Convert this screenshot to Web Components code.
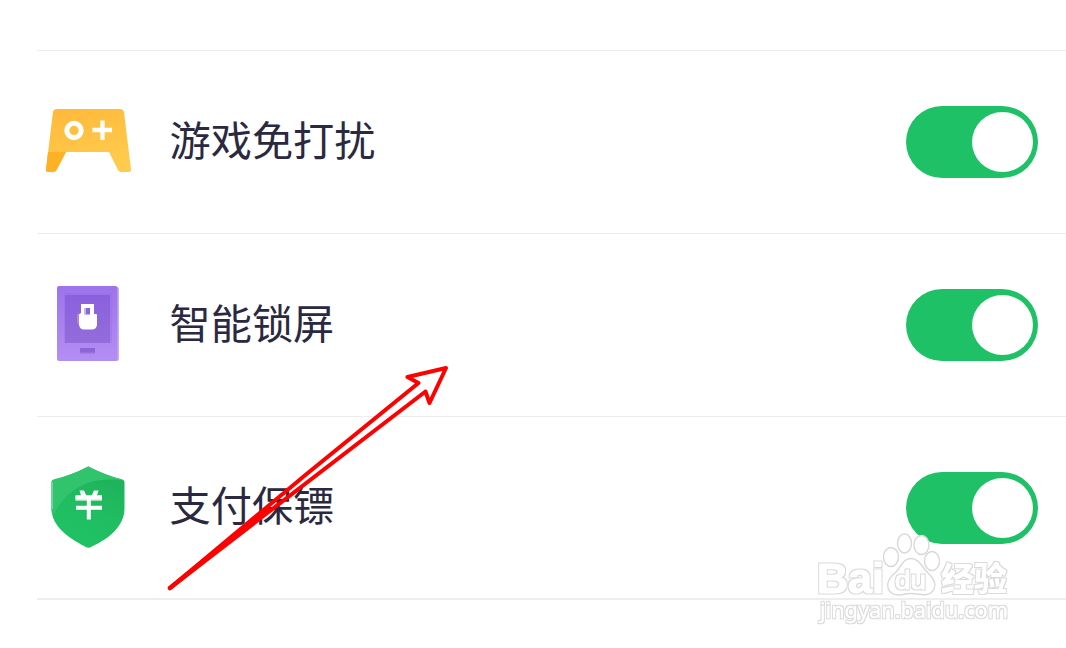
<!DOCTYPE html>
<html lang="zh-CN">
<head>
<meta charset="utf-8">
<title>设置</title>
<style>
body{margin:0;background:#fff;overflow:hidden;font-family:"Noto Sans CJK SC","Liberation Sans",sans-serif}
</style>
</head>
<body>
<settings-page>
  <setting-row label="游戏免打扰"><game-icon slot="icon"></game-icon></setting-row>
  <setting-row label="智能锁屏"><lock-icon slot="icon"></lock-icon></setting-row>
  <setting-row label="支付保镖"><shield-icon slot="icon"></shield-icon></setting-row>
  <pointer-arrow slot="over"></pointer-arrow>
  <brand-mark slot="over"></brand-mark>
</settings-page>
<script>
const define = (name, html, init) => customElements.define(name, class extends HTMLElement {
  constructor() {
    super();
    this.attachShadow({ mode: 'open' }).innerHTML = html;
  }
  connectedCallback() { if (init) init(this); }
});

define('toggle-switch', `<style>
:host{display:flex;box-sizing:border-box;width:132px;height:72px;border-radius:36px;background:#1ec166;padding:6px 5px;justify-content:flex-end}
span{width:61px;height:60px;border-radius:50%;background:#fff}
</style><span></span>`);

define('setting-row', `<style>
:host{display:flex;box-sizing:border-box;height:183px;align-items:center;border-bottom:1px solid #ececec;padding-right:28px}
.icon{width:102px;height:100px;flex:none;display:flex}
.label{margin-left:30.500px;flex:1;padding-bottom:9px;font-size:41.200px;line-height:60px;color:#2b293f;white-space:nowrap}
</style><div class="icon"><slot name="icon"></slot></div><div class="label"></div><toggle-switch></toggle-switch>`,
  el => { el.shadowRoot.querySelector('.label').textContent = el.getAttribute('label'); });

define('settings-page', `<style>
:host{display:block;position:relative;width:1066px;height:648px;overflow:hidden}
main{margin-left:37px;padding-top:50px}
.list{border-top:1px solid #ececec}
::slotted(setting-row:last-of-type){border-bottom:2px solid #eee}
</style><main><div class="list"><slot></slot></div></main><slot name="over"></slot>`);

const icon = (name, body) => define(name, `<style>:host{display:block}svg{display:block}</style><svg width="102" height="100" viewBox="37 0 102 100">${body}</svg>`);

icon('game-icon', `<defs><linearGradient id="g" x1="0" y1="0" x2=".35" y2="1"><stop stop-color="#ffb83a"/><stop offset="1" stop-color="#ffcb4d"/></linearGradient></defs>
<path d="M57 17H120Q123.500 17 124 20.500L131 77Q131.500 80 129 80H121Q119 80 118 78L109 60H66L56.500 78Q55.500 80 53.500 80H48Q45.500 80 46 77L53 20Q53.500 17 57 17Z" fill="url(#g)"/>
<path d="M48 60H66L56.500 78Q55.500 80 53.500 80H48Q45.500 80 46 77Z" fill="#ffb126"/>
<circle cx="74" cy="38.500" r="7.200" fill="none" stroke="#fff" stroke-width="5"/>
<path d="M92.500 38H112M102.500 28.500V48" stroke="#fff" stroke-width="4.300"/>`);

icon('lock-icon', `<defs><linearGradient id="g" x1="0" y1="0" x2="0" y2="1"><stop stop-color="#9d73eb"/><stop offset="1" stop-color="#b28ff3"/></linearGradient><linearGradient id="s" x1="0" y1="0" x2="0" y2="1"><stop stop-color="#8b60df"/><stop offset="1" stop-color="#936dd9"/></linearGradient></defs>
<rect x="59" y="12" width="60" height="74" rx="2" fill="#c6adf5"/><rect x="57" y="11" width="60.500" height="75" rx="2" fill="url(#g)"/>
<path d="M64 18H112V68H64Z" fill="#8e64df" opacity=".25"/>
<path d="M65 20H110V68H65Z" fill="url(#s)"/>
<path d="M77 39H80V50H79Q77 49 77 46Z" fill="#a98ae3"/>
<path fill-rule="evenodd" d="M81 29H94V39H96Q97 39 97 40V50Q96 54.500 92 54.500H84Q80 54.500 79 50V40Q79 38.500 81 38ZM84.500 33V39.500H90V33Z" fill="#fff"/>
<path d="M84.500 33H86V39.500H84.500Z" fill="#c9b5ef"/>
<path d="M80 73H95V78.500H80Z" fill="#9772df"/><path d="M80 73H95V77H80Z" fill="#8c65d6"/>`);

icon('shield-icon', `<defs><linearGradient id="g" x1=".8" y1="0" x2=".4" y2="1"><stop stop-color="#1eaf59"/><stop offset=".55" stop-color="#20bd61"/><stop offset="1" stop-color="#20c265"/></linearGradient><clipPath id="c"><path d="M88.300 8.500Q106 17.500 122 21.500Q124.500 22 124.500 24V51C124 68 110 80 92 88.500Q88.500 91 85 88.500C67 79 52 68 51.500 51V24Q51.500 22 54 21.500Q71 17.500 88.300 8.500Z"/></clipPath></defs>
<g clip-path="url(#c)"><rect x="50" y="7" width="77" height="86" fill="url(#g)"/><path d="M50 7H127V23Q109 20 94 23Q66 31 54 56H50Z" fill="#32c46d"/></g>
<path d="M52.200 24V51" stroke="#8bdcad" stroke-width="1"/>
<path d="M75.500 40.500H102" stroke="#c8efd8" stroke-width="4.500"/>
<path d="M75.500 39.300H102M76 49.800H102M88.800 39V61.500" stroke="#fff" stroke-width="4" fill="none"/>
<path d="M79.500 32.500H84L87 39H81.500ZM94 32.500H98.500L96.500 39H91Z" fill="#fff"/>`);

define('pointer-arrow', `<style>:host{position:absolute;left:160px;top:350px}svg{display:block}</style>
<svg width="300" height="250" viewBox="160 350 300 250"><path d="M170 588L306 474.500L418.500 383L407.500 377L446 368L429.500 403L425.500 391.500L262 517Z" fill="none" stroke="#f00" stroke-width="4" stroke-linejoin="round"/><path d="M170 588L268 509" stroke="#f00" stroke-width="4.500" stroke-linecap="round"/></svg>`);

define('brand-mark', `<style>:host{position:absolute;left:810px;top:525px}svg{display:block}
text{fill:#fff;stroke:#fff;stroke-linejoin:round}
.edge{filter:url(#rim)}
.b{font:bold 43px "Liberation Sans",sans-serif;stroke-width:1.200px}
.d{font:25px "Liberation Sans",sans-serif;stroke-width:1px}
.c{font:900 33px "Noto Sans CJK SC",sans-serif;stroke-width:0}
.u{font:22px "Noto Sans","Liberation Sans",sans-serif;stroke-width:.300px}
.p{fill:#fff;stroke:#d9d9d9;stroke-width:1.400}</style>
<svg width="210" height="108" viewBox="810 525 210 108">
<defs><filter id="rim" filterUnits="userSpaceOnUse" x="810" y="525" width="210" height="108" color-interpolation-filters="sRGB"><feMorphology in="SourceAlpha" operator="dilate" radius="1" result="wide"/><feFlood flood-color="#dadada"/><feComposite in2="wide" operator="in" result="grey"/><feMerge><feMergeNode in="grey"/><feMergeNode in="SourceGraphic"/></feMerge></filter></defs>
<g class="p"><ellipse cx="891" cy="557" rx="7.500" ry="9.500"/><ellipse cx="904.500" cy="543.500" rx="7" ry="9.500"/><ellipse cx="921.500" cy="545" rx="7.500" ry="9.500"/><ellipse cx="932" cy="561" rx="7.500" ry="9.500"/>
<path d="M911 558.500C919 558.500 922 567 928 573C935 580 936 584 934 589C931 596 923 595 917 594Q911 593 905 594C898 596 890 595 888 588C886 582 890 577 896 572C901 567 903 558.500 911 558.500Z"/></g>
<g class="edge">
<text class="b" x="817" y="592.500" textLength="67" lengthAdjust="spacingAndGlyphs">Bai</text>
<text class="d" x="895" y="588.500" textLength="31" lengthAdjust="spacingAndGlyphs">du</text>
<text class="c" x="941" y="590.500" textLength="66" lengthAdjust="spacingAndGlyphs">经验</text>
<text class="u" x="820" y="618" textLength="188" lengthAdjust="spacingAndGlyphs">jingyan.baidu.com</text>
</g>
</svg>`);
</script>
</body>
</html>
